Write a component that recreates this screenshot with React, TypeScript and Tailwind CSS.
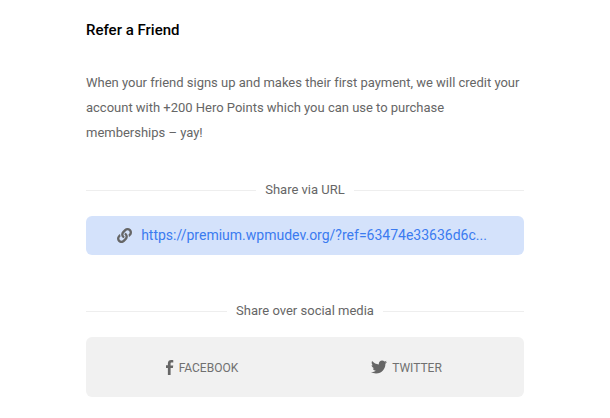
import { FaTwitter, FaLink } from "react-icons/fa";

function Divider({ label }: { label: string }) {
  return (
    <div className="flex items-center gap-[9.5px]">
      <div className="h-px flex-1 bg-[#eeeeee]" />
      <span className="text-[13px] leading-[20px] text-[#666666]">{label}</span>
      <div className="h-px flex-1 bg-[#eeeeee]" />
    </div>
  );
}

export default function App() {
  return (
    <div className="h-[418px] w-[610px] overflow-hidden bg-white font-['Roboto',sans-serif]">
      <div className="mx-[86px] w-[438px] pt-[20px]">
        <h2 className="text-[15px] font-medium leading-[20px] text-[#000000]">Refer a Friend</h2>
        <p className="mt-[30px] text-[13px] leading-[25px] tracking-[-0.01px] text-[#666666]">
          When your friend signs up and makes their first payment, we will credit your account with +200 Hero Points which you can use to purchase memberships – yay!
        </p>
        <div className="mt-[35px]">
          <Divider label="Share via URL" />
        </div>
        <div className="mt-[16px] flex h-[39px] items-center justify-center gap-[9px] rounded-[6px] bg-[#d4e2fb] pr-[6px]">
          <FaLink className="size-[15px] text-[#666666]" />
          <span className="text-[14px] text-[#3b7bf0]">https://premium.wpmudev.org/?ref=63474e33636d6c...</span>
        </div>
        <div className="mt-[46px]">
          <Divider label="Share over social media" />
        </div>
        <div className="mt-[16px] flex h-[60px] items-center justify-center gap-[133px] rounded-[6px] bg-[#f1f1f1] pr-[2px]">
          <div className="flex items-center gap-[5px] text-[#666666]">
            <svg viewBox="0 0 14 28" className="h-[15px] w-[7.5px]" fill="currentColor">
              <path d="M13.6.3v4.4h-2.6c-2 0-2.4 1-2.4 2.4v3.1h4.9l-.7 4.9H8.6V28H3.5V14.9H0v-4.9h3.5V6.4C3.5 2.2 6.1 0 9.9 0c1.800 0 3.100.1 3.700.3z" />
            </svg>
            <span className="mt-[2px] text-[12px] text-[#707070]">FACEBOOK</span>
          </div>
          <div className="flex items-center gap-[5px] text-[#666666]">
            <FaTwitter className="size-[16px]" />
            <span className="mt-[2px] text-[12px] text-[#707070]">TWITTER</span>
          </div>
        </div>
      </div>
    </div>
  );
}
